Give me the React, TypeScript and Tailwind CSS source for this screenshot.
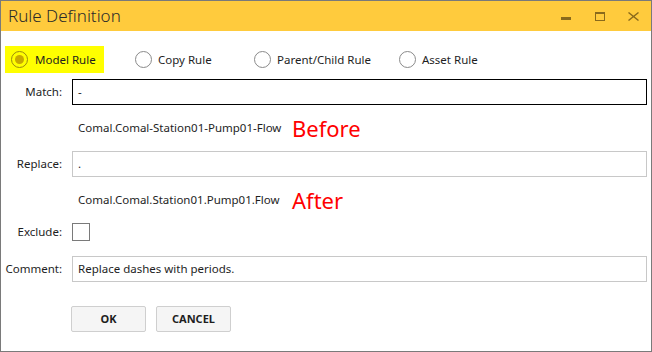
import { useState } from 'react';

type RuleKind = 'model' | 'copy' | 'parent' | 'asset';

const font = "font-['Segoe_UI','Noto_Sans',sans-serif]";

function Radio({ checked }: { checked: boolean }) {
  return (
    <span
      className={
        'flex h-[17px] w-[17px] shrink-0 items-center justify-center rounded-full border ' +
        (checked ? 'border-[#9a8a10]' : 'border-[#8a8a8a] bg-white')
      }
    >
      {checked && <span className="h-[9px] w-[9px] rounded-full bg-[#c9a800]" />}
    </span>
  );
}

function Field({ label, value, focused }: { label: string; value: string; focused?: boolean }) {
  return (
    <div className="flex h-[26px] items-center">
      <span className="w-[62px] pr-[1px] text-right">{label}</span>
      <div
        className={
          'ml-[9px] flex h-full w-[575px] items-center border px-[5px] ' +
          (focused ? 'border-black' : 'border-[#c8c8c8]')
        }
      >
        {value}
      </div>
    </div>
  );
}

function Preview({ text, tag }: { text: string; tag: string }) {
  return (
    <div className="flex h-[46px] items-center pl-[77px]">
      <span className="w-[214px]">{text}</span>
      <span className="text-[22px] leading-none text-[#ff0000]">{tag}</span>
    </div>
  );
}

export default function App() {
  const [kind, setKind] = useState<RuleKind>('model');

  return (
    <div className={`h-[352px] w-[652px] border border-[#7a7a7a] bg-white text-[11.5px] text-[#1e1e1e] ${font}`}>
      {/* title bar */}
      <div className="flex h-[30px] items-center bg-[#ffcb3d] pl-[7px] pr-[12px]">
        <span className="text-[17px] font-light text-[#2a2a2a]">Rule Definition</span>
        <div className="ml-auto flex items-start self-start pt-[11px]">
          <svg width="10" height="9" viewBox="0 0 10 9">
            <rect x="0" y="5" width="10" height="3" fill="#8a6a1c" />
          </svg>
          <svg width="10" height="9" viewBox="0 0 10 9" className="ml-[24px]">
            <rect x="0.5" y="0.5" width="9" height="8" fill="none" stroke="#8a6a1c" />
            <rect x="0" y="0" width="10" height="2" fill="#8a6a1c" />
          </svg>
          <svg width="11" height="9" viewBox="0 0 11 9" className="ml-[23px]">
            <path d="M0.5 0.5L10.5 8.5M10.5 0.5L0.5 8.5" stroke="#8a6a1c" strokeWidth="1.4" />
          </svg>
        </div>
      </div>

      {/* rule kind */}
      <div className="mt-[15px] flex h-[27px] items-center pl-[4px]">
        <button
          onClick={() => setKind('model')}
          className="flex h-full w-[99px] items-center gap-[7px] bg-[#ffff00] pl-[6px]"
        >
          <Radio checked={kind === 'model'} />
          <span>Model Rule</span>
        </button>
        <button onClick={() => setKind('copy')} className="ml-[31px] flex w-[119px] items-center gap-[6px]">
          <Radio checked={kind === 'copy'} />
          <span>Copy Rule</span>
        </button>
        <button onClick={() => setKind('parent')} className="flex w-[145px] items-center gap-[6px]">
          <Radio checked={kind === 'parent'} />
          <span>Parent/Child Rule</span>
        </button>
        <button onClick={() => setKind('asset')} className="flex items-center gap-[6px]">
          <Radio checked={kind === 'asset'} />
          <span>Asset Rule</span>
        </button>
      </div>

      <div className="mt-[6px]">
        <Field label="Match:" value="-" focused />
        <Preview text="Comal.Comal-Station01-Pump01-Flow" tag="Before" />
        <Field label="Replace:" value="." />
        <Preview text="Comal.Comal.Station01.Pump01.Flow" tag="After" />

        <div className="flex h-[18px] items-center">
          <span className="w-[62px] pr-[1px] text-right">Exclude:</span>
          <span className="ml-[9px] h-[18px] w-[18px] border border-[#7a7a7a]" />
        </div>

        <div className="mt-[15px]">
          <Field label="Comment:" value="Replace dashes with periods." />
        </div>

        <div className="mt-[24px] flex gap-[10px] pl-[70px]">
          <button className="h-[26px] w-[75px] rounded-[2px] border border-[#cfcfcf] bg-[#f5f5f5] text-[11px] font-bold">
            OK
          </button>
          <button className="h-[26px] w-[75px] rounded-[2px] border border-[#cfcfcf] bg-[#f5f5f5] text-[11px] font-bold">
            CANCEL
          </button>
        </div>
      </div>
    </div>
  );
}
